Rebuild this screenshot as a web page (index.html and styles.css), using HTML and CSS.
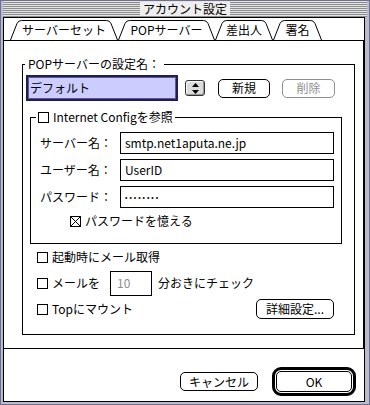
FILE: index.html
```html
<!DOCTYPE html>
<html lang="ja">

<head>
  <meta charset="UTF-8">
  <title>アカウント設定</title>
  <link rel="stylesheet" href="styles.css">
</head>

<body>
  <div class="window">
    <div class="titlebar"><span class="title">アカウント設定</span></div>

    <div class="frame">
      <div class="tabs">
        <div class="tab tab-server">
          <svg viewBox="0 0 108 20"><path d="M0.5 20 L7 3.5 Q8.2 0.5 11.5 0.5 H96.5 Q99.8 0.5 101 3.5 L107.5 20" /></svg>
          サーバーセット
        </div>
        <div class="tab tab-pop">
          <svg viewBox="0 0 97 20"><path d="M0.5 20 L7 3.5 Q8.2 0.5 11.5 0.5 H85.5 Q88.8 0.5 90 3.5 L96.5 20" /></svg>
          POPサーバー
        </div>
        <div class="tab tab-from">
          <svg viewBox="0 0 58 20"><path d="M0.5 20 L7 3.5 Q8.2 0.5 11.5 0.5 H46.5 Q49.8 0.5 51 3.5 L57.5 20" /></svg>
          差出人
        </div>
        <div class="tab tab-sign">
          <svg viewBox="0 0 49 20"><path d="M0.5 20 L7 3.5 Q8.2 0.5 11.5 0.5 H37.5 Q40.8 0.5 42 3.5 L48.5 20" /></svg>
          署名
        </div>
      </div>

      <div class="panel">
        <fieldset class="group group-outer">
          <legend>POPサーバーの設定名：</legend>

          <div class="name-row">
            <div class="name-field">デフォルト</div>
            <div class="stepper">
              <svg viewBox="0 0 7 11" width="7" height="11"><path d="M3.5 0 L7 4 H0 Z M0 7 H7 L3.5 11 Z" /></svg>
            </div>
            <div class="btn btn-new">新規</div>
            <div class="btn btn-delete disabled">削除</div>
          </div>

          <fieldset class="group group-inner">
            <legend><span class="checkbox"></span>Internet Configを参照</legend>

            <div class="config-grid">
              <label>サーバー名：</label>
              <div class="text-field">smtp.net1aputa.ne.jp</div>
              <label>ユーザー名：</label>
              <div class="text-field">UserID</div>
              <label>パスワード：</label>
              <div class="text-field password">••••••••</div>
            </div>

            <div class="remember-row">
              <span class="checkbox checked">
                <svg viewBox="0 0 9 9" width="9" height="9"><path d="M0 0 L9 9 M9 0 L0 9" /></svg>
              </span>
              パスワードを憶える
            </div>
          </fieldset>

          <div class="opt-row">
            <span class="checkbox"></span>起動時にメール取得
          </div>
          <div class="opt-row">
            <span class="checkbox"></span>メールを
            <div class="text-field minutes">10</div>
            分おきにチェック
          </div>
          <div class="opt-row">
            <span class="checkbox"></span>Topにマウント
            <div class="btn btn-detail">詳細設定...</div>
          </div>
        </fieldset>
      </div>

      <div class="footer">
        <div class="btn btn-cancel">キャンセル</div>
        <div class="default-ring">
          <div class="btn btn-ok">OK</div>
        </div>
      </div>
    </div>
  </div>
</body>

</html>
```

FILE: styles.css
```css
* {
  box-sizing: border-box;
}

body {
  margin: 0;
  font-family: "Noto Sans CJK JP", "Noto Sans", sans-serif;
  font-size: 12px;
  line-height: 14px;
  color: #000;
  background: #fff;
}

.window {
  width: 370px;
  height: 405px;
  display: flex;
  flex-direction: column;
  background: #b9b9d0;
  border: 1px solid #6f6f8e;
}

.titlebar {
  height: 16px;
  margin: 0 2px;
  display: flex;
  align-items: center;
  justify-content: center;
  background: repeating-linear-gradient(to bottom, #e4e4e4 0 1px, #8c8c8c 1px 2px);
}

.title {
  height: 14px;
  padding: 0 3px;
  background: #eeeeee;
}

.frame {
  flex: 1;
  margin: 0 4px 2px 2px;
  display: flex;
  flex-direction: column;
  background: #fff;
  border: 1px solid #000;
}

/* tabs */

.tabs {
  height: 22px;
  display: flex;
  align-items: flex-end;
  padding-left: 6px;
}

.tab {
  position: relative;
  height: 20px;
  display: flex;
  align-items: center;
  justify-content: center;
}

.tab svg {
  position: absolute;
  left: 0;
  top: 0;
  width: 100%;
  height: 100%;
  fill: none;
  stroke: #000;
  stroke-width: 1;
}

.tab-server {
  width: 108px;
}

.tab-pop {
  width: 97px;
}

.tab-from {
  width: 58px;
}

.tab-sign {
  width: 49px;
}

.panel {
  height: 309px;
  border-top: 1px solid #000;
  border-right: 1px solid #000;
  border-bottom: 1px solid #000;
}

/* group boxes */

.group {
  margin: 0;
  padding: 0;
  border: 1px solid #000;
  min-inline-size: 0;
}

.group legend {
  display: flex;
  align-items: center;
  height: 14px;
  padding: 0 3px;
  background: #fff;
}

.group-outer {
  width: 333px;
  height: 278px;
  margin: 16px 0 0 18px;
}

.group-outer > legend {
  margin-left: 2px;
  padding-right: 4px;
}

.group-inner {
  width: 312px;
  height: 134px;
  margin: 9px 0 0 7px;
}

.group-inner > legend {
  margin-left: 5px;
  padding: 0 2px;
}

/* controls */

.checkbox {
  width: 11px;
  height: 11px;
  flex: none;
  display: flex;
  align-items: center;
  justify-content: center;
  margin-right: 4px;
  border: 1px solid #000;
  background: #fff;
}

.checked svg {
  stroke: #000;
  stroke-width: 1;
}

.btn {
  height: 19px;
  display: flex;
  align-items: center;
  justify-content: center;
  border: 1px solid #000;
  border-radius: 5px;
  background: #fff;
}

.disabled {
  color: #8e8e8e;
  border-color: #8e8e8e;
}

.text-field {
  height: 22px;
  display: flex;
  align-items: center;
  padding-left: 4px;
  border: 1px solid #000;
}

.name-row {
  display: flex;
  align-items: center;
  margin: 4px 0 0 3px;
}

.name-field {
  width: 152px;
  height: 26px;
  display: flex;
  align-items: center;
  padding-left: 2px;
  border: 2px solid #1e1e50;
  box-shadow: inset 0 0 0 1px #5a5a96;
  background: #ccccff;
}

.stepper {
  width: 20px;
  height: 16px;
  margin-left: 7px;
  display: flex;
  align-items: center;
  justify-content: center;
  border: 1px solid #333;
  border-radius: 3px;
  background: #dcdcdc;
  box-shadow: inset 1px 1px 0 #fff, inset -1px -1px 0 #999;
}

.btn-new {
  width: 52px;
  margin-left: 13px;
}

.btn-delete {
  width: 53px;
  margin-left: 12px;
}

.config-grid {
  display: grid;
  grid-template-columns: 80px 214px;
  row-gap: 5px;
  align-items: center;
  margin: 8px 0 0 9px;
}

.password {
  font-size: 7px;
  letter-spacing: 2px;
}

.remember-row {
  display: flex;
  align-items: center;
  margin: 6px 0 0 39px;
}

.opt-row {
  height: 26px;
  display: flex;
  align-items: center;
  margin: 0 20px 0 14px;
}

.opt-row:first-of-type {
  margin-top: 7px;
}

.minutes {
  width: 42px;
  height: 25px;
  margin: 0 6px 0 10px;
  padding-left: 6px;
  color: #8e8e8e;
}

.btn-detail {
  width: 78px;
  height: 20px;
  margin-left: auto;
}

/* bottom buttons */

.footer {
  flex: 1;
  display: flex;
  align-items: center;
  justify-content: flex-end;
  gap: 14px;
  padding: 13px 8px 0 0;
}

.btn-cancel {
  width: 78px;
}

.default-ring {
  padding: 1px;
  border: 3px solid #000;
  border-radius: 9px;
}

.btn-ok {
  width: 76px;
  height: 21px;
}
```
